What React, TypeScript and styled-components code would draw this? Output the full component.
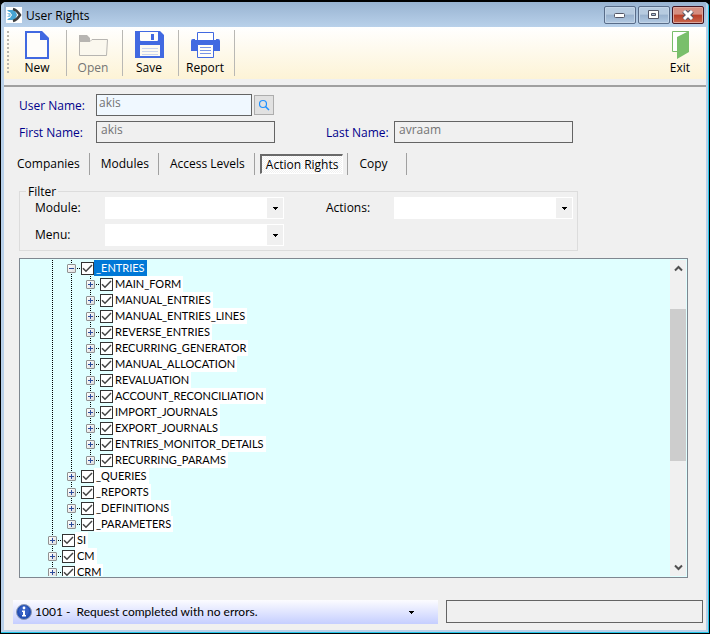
import React, { useState } from "react";
import styled, { createGlobalStyle, css } from "styled-components";

const Global = createGlobalStyle`
  *, *::before, *::after { box-sizing: border-box; }
  body { margin: 0; background: #000; }
  button, input, select { font: inherit; color: inherit; margin: 0; }
`;

const Window = styled.div`
  height: 100vh;
  min-height: 480px;
  display: flex;
  flex-direction: column;
  overflow: hidden;
  font: 12px/16px "Open Sans", "Noto Sans", sans-serif;
  color: #000;
  background: #b9d1ea;
  border: 1px solid #000;
  border-top-width: 2px;
  border-radius: 6px 6px 0 0;
  padding: 0 3px 3px;
  box-shadow: inset -1px -1px 0 #25c5e8;
`;

const TitleBar = styled.header`
  height: 25px;
  flex: none;
  display: flex;
  align-items: center;
  gap: 4px;
  padding-left: 2px;
  background: linear-gradient(#98b3d1, #b9d1ea);
`;

const Title = styled.h1`
  margin: 0;
  padding-top: 2px;
  flex: 1;
  font-size: 12px;
  font-weight: 400;
`;

const WindowButtons = styled.div`
  display: flex;
  gap: 2px;
  padding-right: 2px;
`;

const WindowButton = styled.button<{ $close?: boolean }>`
  width: 32px;
  height: 18px;
  padding: 0;
  display: grid;
  place-items: center;
  border-radius: 2px;
  border: 1px solid ${(p) => (p.$close ? "#431422" : "#586c89")};
  box-shadow: inset 0 0 0 1px ${(p) => (p.$close ? "#dca79d" : "#c3d5e8")};
  background: ${(p) =>
    p.$close
      ? "linear-gradient(#d58e81 45%, #b93e28 50%, #c9684f)"
      : "linear-gradient(#b7cbe0 45%, #98b1cd 50%, #b3cae3)"};
`;

const Toolbar = styled.div`
  height: 52px;
  flex: none;
  display: flex;
  align-items: center;
  padding: 0 4px 0 3px;
  background: linear-gradient(#ffffff, #fdf3d6);
`;

const Grip = styled.span`
  width: 2px;
  height: 44px;
  margin-right: 2px;
  background: repeating-linear-gradient(#b9b6ae 0 2px, transparent 2px 4px);
`;

const ToolButton = styled.button`
  width: 56px;
  height: 46px;
  padding: 1px 3px 0 0;
  display: flex;
  flex-direction: column;
  align-items: center;
  gap: 1px;
  background: none;
  border: 0;
  border-right: 1px solid #b9b8b4;
  &:disabled { color: #757575; }
  &:last-child { margin-left: auto; width: 44px; padding-right: 0; border: 0; }
`;

const Body = styled.main`
  flex: 1;
  min-height: 0;
  display: flex;
  flex-direction: column;
  padding: 6px 3px 6px 9px;
  background: #f0f0f0;
`;

const Rule = styled.hr`
  flex: none;
  margin: 0 -3px 7px -9px;
  border: 0;
  height: 2px;
  background: #a0a0a0;
`;

const columns = css`
  display: grid;
  grid-template-columns: 77px 179px 51px 68px 179px;
  row-gap: 5px;
  align-items: center;
`;

const Form = styled.form`
  ${columns}
  flex: none;
  padding-left: 6px;
`;

const Label = styled.label<{ $navy?: boolean; $second?: boolean }>`
  color: ${(p) => (p.$navy ? "#00008b" : "#000")};
  padding-top: ${(p) => (p.$navy ? "2px" : "0")};
  grid-column: ${(p) => (p.$second ? 4 : 1)};
`;

const FieldWithButton = styled.div`
  display: flex;
  align-items: center;
  gap: 2px;
`;

const Field = styled.input<{ $tint?: boolean }>`
  height: 22px;
  width: ${(p) => (p.$tint ? "156px" : "100%")};
  padding: 0 4px 5px ${(p) => (p.$tint ? "2px" : "4px")};
  border: 1px solid #646464;
  background: ${(p) => (p.$tint ? "#f0f8ff" : "#f0f0f0")};
  color: #747474;
  outline: 0;
`;

const SearchButton = styled.button`
  width: 20px;
  height: 20px;
  padding: 0;
  display: grid;
  place-items: center;
  border: 1px solid #adadad;
  background: #e1e1e1;
`;

const Tabs = styled.nav`
  flex: none;
  display: flex;
  align-items: center;
  height: 22px;
  margin: 10px 0;
`;

const Tab = styled.button<{ $active?: boolean }>`
  height: ${(p) => (p.$active ? "20px" : "22px")};
  padding: ${(p) => (p.$active ? "0 4px" : "0 9px 0 11px")};
  border: 0;
  background: none;
  white-space: nowrap;
  ${(p) =>
    p.$active
      ? css`
          margin: 0 4px 0 5px;
          border: 1px solid #fff;
          border-top: 2px solid #696969;
          border-left: 2px solid #696969;
          background: repeating-conic-gradient(#f0f0f0 0 25%, #ffffff 0 50%) 0 0 / 2px 2px;
        `
      : css`
          border-right: 1px solid #a0a0a0;
        `}
  &:first-child { padding-left: 4px; }
  &:last-child { padding-right: 18px; border-left: 1px solid #a0a0a0; }
`;

const Filter = styled.fieldset`
  flex: none;
  align-self: flex-start;
  margin: 0 0 7px 6px;
  padding: 0 4px 4px 15px;
  border: 1px solid #dcdcdc;
`;

const Legend = styled.legend`
  margin-left: -9px;
  padding: 0 2px;
  height: 12px;
  line-height: 14px;
`;

const FilterGrid = styled.div`
  ${columns}
  grid-template-columns: 70px 179px 42px 68px 179px;
`;

const Combo = styled.div`
  position: relative;
  height: 22px;
  background: #fff;
`;

const Select = styled.select`
  appearance: none;
  width: 100%;
  height: 22px;
  padding: 0 20px 0 4px;
  border: 0;
  background: transparent;
  outline: 0;
`;

const ComboArrow = styled.span`
  position: absolute;
  inset: 1px 1px 1px auto;
  width: 16px;
  display: grid;
  place-items: center;
  background: #f0f0f0;
  pointer-events: none;
`;

const TreePanel = styled.section`
  flex: 1;
  min-height: 0;
  margin: 0 15px 0 6px;
  padding: 1px 1px 1px 0;
  display: flex;
  border: 1px solid #7f8790;
  background: #e0ffff;
`;

const Tree = styled.ul`
  flex: 1;
  margin: 0;
  padding: 0 0 0 23px;
  overflow: hidden;
  list-style: none;
`;

const TreeRow = styled.li`
  height: 16px;
  display: flex;
  align-items: center;
`;

const dots = "repeating-linear-gradient(#000 0 1px, transparent 1px 2px)";

const Guide = styled.span<{ $half?: boolean }>`
  width: 19px;
  height: 16px;
  flex: none;
  display: grid;
  place-items: center;
  background: ${dots} 9px 0 / 1px ${(p) => (p.$half ? "8px" : "16px")} no-repeat;
`;

const NodeGuide = styled(Guide)`
  background:
    ${dots} 9px 0 / 1px ${(p) => (p.$half ? "8px" : "16px")} no-repeat,
    repeating-linear-gradient(90deg, #000 0 1px, transparent 1px 2px) 15px 8px / 4px 1px no-repeat;
`;

const Expander = styled.button`
  width: 9px;
  height: 9px;
  padding: 0;
  display: grid;
  place-items: center;
  border: 1px solid #919191;
  border-radius: 1px;
  background: linear-gradient(135deg, #fff, #ddd);
`;

const NodeLabel = styled.label`
  display: flex;
  align-items: center;
  white-space: nowrap;
`;

const Check = styled.input`
  appearance: none;
  width: 13px;
  height: 13px;
  border: 1px solid #333;
  background: #fff;
  &:checked {
    background: #fff
      url("data:image/svg+xml,%3Csvg xmlns='http://www.w3.org/2000/svg' viewBox='0 0 11 11'%3E%3Cpath d='M1 5.2 4 8.2 10 2' fill='none' stroke='%23444' stroke-width='1.5'/%3E%3C/svg%3E");
  }
`;

const NodeText = styled.span<{ $selected?: boolean }>`
  height: 16px;
  padding: 0 2px;
  font: 11px/16px Lato, "Open Sans", sans-serif;
  background: ${(p) => (p.$selected ? "#0078d7" : "#fff")};
  color: ${(p) => (p.$selected ? "#fff" : "#000")};
`;

const ScrollBar = styled.div`
  width: 16px;
  display: grid;
  grid-template-rows: 16px 33fr 153fr 98fr 17px;
  background: #f0f0f0;
`;

const ScrollButton = styled.button`
  padding: 0;
  border: 0;
  display: grid;
  place-items: center;
  background: none;
  &:last-child { grid-row: 5; }
`;

const Thumb = styled.span`
  grid-row: 3;
  background: #cdcdcd;
`;

const StatusBar = styled.footer`
  flex: none;
  display: grid;
  grid-template-columns: 425fr 257fr;
  gap: 8px;
  margin-top: 22px;
`;

const Message = styled.div`
  height: 24px;
  display: flex;
  align-items: center;
  gap: 3px;
  padding: 0 24px 0 3px;
  background: linear-gradient(#fcfcff, #c5ceff);
`;

const MessageText = styled.span`
  flex: 1;
  font-family: Lato, "Open Sans", sans-serif;
  white-space: pre;
`;

const PlainButton = styled.button`
  padding: 0;
  border: 0;
  background: none;
  display: grid;
`;

const Progress = styled.div`
  height: 23px;
  border: 1px solid #646464;
`;

const Arrow = () => (
  <svg width="5" height="3" viewBox="0 0 5 3" shapeRendering="crispEdges">
    <path d="M0 0h5v1H4v1H3v1H2V2H1V1H0z" />
  </svg>
);

const Logo = () => (
  <svg width="16" height="16" viewBox="0 0 16 16">
    <path fill="#fff" d="M0 0h16v16H0z" />
    <path fill="#47a4d3" d="M1 3h5c3 0 4 2 5 5-1 3-2 5-5 5H1l2-2h1l2-3-2-3H3z" />
    <path fill="#8cc8e6" d="M1 6h3l1 2-1 2H1l2-2z" />
    <path fill="none" stroke="#3e3e3e" strokeWidth="2.4" d="M7 2c4 1 5 3 7 6-2 3-3 5-7 6" />
  </svg>
);

const NewIcon = () => (
  <svg width="24" height="28" viewBox="0 0 24 28">
    <path d="M1 1h15l7 7v19H1z" fill="#fefdfa" stroke="#4169e1" strokeWidth="2" />
    <path d="M15 0h2l7 7v2h-9z" fill="#4169e1" />
  </svg>
);

const OpenIcon = () => (
  <svg width="30" height="28" viewBox="0 0 30 28">
    <path d="M1 4h8l3 3v3H4L2 24H1z" fill="#b7b5b1" />
    <path d="M1.500 24.500V10.500H12l2-2h15.500l-1 16z" fill="#fbf8ee" stroke="#b7b5b1" />
  </svg>
);

const SaveIcon = () => (
  <svg width="30" height="28" viewBox="0 0 30 28">
    <path d="M1 0h25l4 4v23H1z" fill="#4169e1" />
    <path d="M6 1h18v8q0 1-1 1H7q-1 0-1-1z" fill="#fffefa" />
    <path d="M17 3h3v6h-3z" fill="#4169e1" />
    <path d="M6 14h20v11H6z" fill="#fdfaf0" />
    <path d="M8 17.500h16M8 20.500h16M8 23.500h16" stroke="#c9d4ee" />
  </svg>
);

const ReportIcon = () => (
  <svg width="30" height="28" viewBox="0 0 30 28">
    <path d="M7.500 9V1.500h16V9" fill="#fff" stroke="#4169e1" />
    <path d="M1 10q0-2 2-2h2v1h21V8h2q2 0 2 2v10H1z" fill="#4169e1" />
    <path d="M7.500 13.500h16v13h-16z" fill="#fffdf8" stroke="#4169e1" />
    <path d="M10 16.500h11M10 19.500h11M10 22.500h11" stroke="#7894e6" />
  </svg>
);

const ExitIcon = () => (
  <svg width="20" height="28" viewBox="0 0 20 28">
    <path d="M2.500 .500h16v20h-16z" fill="#fff" stroke="#79bd6b" />
    <path d="M7 6 19 0v21L7 28z" fill="#79bf6b" />
  </svg>
);

const InfoIcon = () => (
  <svg width="16" height="16" viewBox="0 0 16 16">
    <circle cx="8" cy="8" r="7.500" fill="#2450b5" stroke="#8f9bb5" />
    <circle cx="8" cy="7" r="5" fill="#3660c4" />
    <circle cx="8" cy="4" r="1.400" fill="#fff" />
    <path fill="#fff" d="M6 6.500h3V11h1v1.500H6V11h1V8H6z" />
  </svg>
);

const Chevron = ({ down }: { down?: boolean }) => (
  <svg width="9" height="7" viewBox="0 0 9 7">
    <path d={down ? "M1 1.500 4.500 5 8 1.500" : "M1 5.500 4.500 2 8 5.500"} fill="none" stroke="#505050" strokeWidth="2" />
  </svg>
);

type TreeNode = { name: string; level: number; last?: boolean; open?: boolean };

const nodes: TreeNode[] = [
  { name: "_ENTRIES", level: 1, open: true },
  ...[
    "MAIN_FORM",
    "MANUAL_ENTRIES",
    "MANUAL_ENTRIES_LINES",
    "REVERSE_ENTRIES",
    "RECURRING_GENERATOR",
    "MANUAL_ALLOCATION",
    "REVALUATION",
    "ACCOUNT_RECONCILIATION",
    "IMPORT_JOURNALS",
    "EXPORT_JOURNALS",
    "ENTRIES_MONITOR_DETAILS",
    "RECURRING_PARAMS",
  ].map((name) => ({ name, level: 2, last: name === "RECURRING_PARAMS" })),
  { name: "_QUERIES", level: 1 },
  { name: "_REPORTS", level: 1 },
  { name: "_DEFINITIONS", level: 1 },
  { name: "_PARAMETERS", level: 1, last: true },
  { name: "SI", level: 0 },
  { name: "CM", level: 0 },
  { name: "CRM", level: 0 },
];

const Node = ({ node }: { node: TreeNode }) => {
  const [checked, setChecked] = useState(true);
  return (
    <TreeRow>
      {Array.from({ length: node.level }, (_, i) => (
        <Guide key={i} />
      ))}
      <NodeGuide $half={node.last}>
        <Expander type="button" aria-label={`Toggle ${node.name}`}>
          <svg width="5" height="5" viewBox="0 0 5 5" shapeRendering="crispEdges">
            <path d={node.open ? "M0 2h5v1H0z" : "M0 2h5v1H0zM2 0h1v5H2z"} fill="#2b4b9b" />
          </svg>
        </Expander>
      </NodeGuide>
      <NodeLabel>
        <Check type="checkbox" checked={checked} onChange={(e) => setChecked(e.target.checked)} />
        <NodeText $selected={node.open}>{node.name}</NodeText>
      </NodeLabel>
    </TreeRow>
  );
};

const ComboBox = ({ id }: { id: string }) => (
  <Combo>
    <Select id={id} defaultValue="">
      <option value="" />
    </Select>
    <ComboArrow>
      <Arrow />
    </ComboArrow>
  </Combo>
);

export default function App() {
  return (
    <>
      <Global />
      <Window>
        <TitleBar>
          <Logo />
          <Title>User Rights</Title>
          <WindowButtons>
            <WindowButton aria-label="Minimize">
              <svg width="12" height="6" viewBox="0 0 12 6">
                <rect x=".5" y="1.500" width="10" height="4" rx="1" fill="#fff" stroke="#535666" />
              </svg>
            </WindowButton>
            <WindowButton aria-label="Maximize">
              <svg width="12" height="10" viewBox="0 0 12 10">
                <path d="M.5.500h10v8H.5zM3.500 3.500v2h4v-2z" fill="#fff" fillRule="evenodd" stroke="#535666" />
              </svg>
            </WindowButton>
            <WindowButton $close aria-label="Close">
              <svg width="12" height="10" viewBox="0 0 12 10">
                <path d="M2 1 10 9M10 1 2 9" stroke="#535666" strokeWidth="5" />
                <path d="M2 1 10 9M10 1 2 9" stroke="#fff" strokeWidth="3" />
              </svg>
            </WindowButton>
          </WindowButtons>
        </TitleBar>
        <Toolbar>
          <Grip />
          <ToolButton><NewIcon />New</ToolButton>
          <ToolButton disabled><OpenIcon />Open</ToolButton>
          <ToolButton><SaveIcon />Save</ToolButton>
          <ToolButton><ReportIcon />Report</ToolButton>
          <ToolButton><ExitIcon />Exit</ToolButton>
        </Toolbar>
        <Body>
          <Rule />
          <Form>
            <Label $navy htmlFor="user">User Name:</Label>
            <FieldWithButton>
              <Field $tint id="user" defaultValue="akis" />
              <SearchButton type="button" aria-label="Search user">
                <svg width="12" height="12" viewBox="0 0 12 12" fill="none" stroke="#1e90ff">
                  <circle cx="5" cy="5" r="3.500" strokeWidth="1.200" />
                  <path d="M7.500 7.500 11 11" strokeWidth="1.500" />
                </svg>
              </SearchButton>
            </FieldWithButton>
            <Label $navy htmlFor="first">First Name:</Label>
            <Field id="first" defaultValue="akis" readOnly />
            <Label $navy $second htmlFor="last">Last Name:</Label>
            <Field id="last" defaultValue="avraam" readOnly />
          </Form>
          <Tabs>
            <Tab>Companies</Tab>
            <Tab>Modules</Tab>
            <Tab>Access Levels</Tab>
            <Tab $active>Action Rights</Tab>
            <Tab>Copy</Tab>
          </Tabs>
          <Filter>
            <Legend>Filter</Legend>
            <FilterGrid>
              <Label htmlFor="module">Module:</Label>
              <ComboBox id="module" />
              <Label $second htmlFor="actions">Actions:</Label>
              <ComboBox id="actions" />
              <Label htmlFor="menu">Menu:</Label>
              <ComboBox id="menu" />
            </FilterGrid>
          </Filter>
          <TreePanel>
            <Tree>
              {nodes.map((node) => (
                <Node key={node.name} node={node} />
              ))}
            </Tree>
            <ScrollBar>
              <ScrollButton aria-label="Scroll up"><Chevron /></ScrollButton>
              <Thumb />
              <ScrollButton aria-label="Scroll down"><Chevron down /></ScrollButton>
            </ScrollBar>
          </TreePanel>
          <StatusBar>
            <Message>
              <InfoIcon />
              <MessageText>1001 -  Request completed with no errors.</MessageText>
              <PlainButton aria-label="Message history"><Arrow /></PlainButton>
            </Message>
            <Progress />
          </StatusBar>
        </Body>
      </Window>
    </>
  );
}
